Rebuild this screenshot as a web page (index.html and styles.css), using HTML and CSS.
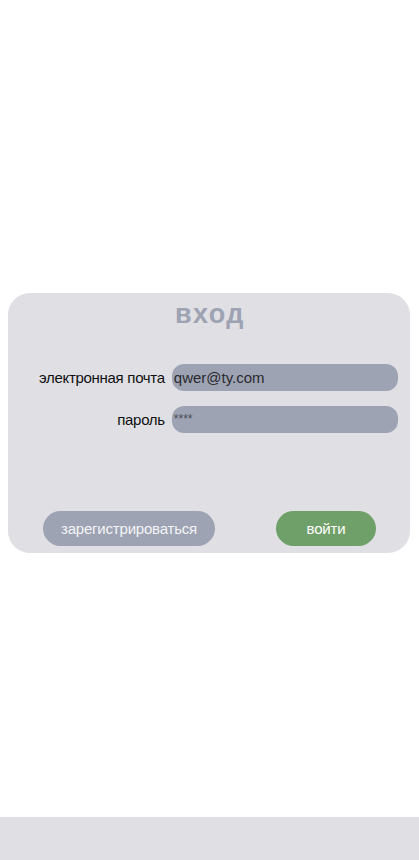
FILE: index.html
```html
<!DOCTYPE html>
<html lang="ru">
<head>
<meta charset="utf-8">
<title>вход</title>
<link rel="stylesheet" href="styles.css">
</head>
<body>
<div class="page">
  <main class="main">
    <form class="card">
      <h1 class="title">вход</h1>
      <div class="fields">
        <label class="label" for="email">электронная почта</label>
        <div class="input email" id="email">qwer@ty.com</div>
        <label class="label" for="pass">пароль</label>
        <div class="input pass" id="pass">****</div>
      </div>
      <div class="actions">
        <button type="button" class="btn btn-reg">зарегистрироваться</button>
        <button type="button" class="btn btn-login">войти</button>
      </div>
    </form>
  </main>
  <footer class="footer"></footer>
</div>
</body>
</html>
```
FILE: styles.css
```css
* { box-sizing: border-box; }
html, body { margin: 0; padding: 0; }
body {
  font-family: "Liberation Sans", Arial, sans-serif;
  background: #ffffff;
  color: #111;
}
.page {
  min-height: 860px;
  display: flex;
  flex-direction: column;
}
.main {
  flex: 1;
  padding: 293px 9px 0 8px;
}
.card {
  background: #dfdfe4;
  border-radius: 22px;
  height: 260px;
  display: flex;
  flex-direction: column;
}
.title {
  margin: 6px 0 0 2px;
  font-size: 27px;
  line-height: 30px;
  font-weight: bold;
  text-align: center;
  color: #9ea3b3;
  letter-spacing: 1.4px;
}
.fields {
  margin-top: 35px;
  display: grid;
  grid-template-columns: auto 1fr;
  column-gap: 7px;
  row-gap: 15px;
  padding: 0 12px 0 31px;
  align-items: center;
}
.label {
  font-size: 15px;
  letter-spacing: -0.3px;
  text-align: right;
  color: #111;
}
.input {
  height: 27px;
  border-radius: 12px;
  background: #9ea3b3;
  padding-left: 2px;
  display: flex;
  align-items: center;
}
.email {
  font-size: 15px;
  color: #2a2a2e;
}
.pass {
  font-size: 12px;
  color: #4a4c55;
  align-items: flex-start;
  padding-top: 6px;
}
.actions {
  margin-top: 78px;
  display: flex;
  justify-content: space-between;
  padding: 0 34px 0 35px;
}
.btn {
  height: 35px;
  border: none;
  border-radius: 18px;
  font-family: "Liberation Sans", Arial, sans-serif;
  font-size: 15px;
  letter-spacing: -0.2px;
  color: #f4f4f6;
  padding: 0;
}
.btn-reg {
  width: 172px;
  background: #9ea3b3;
}
.btn-login {
  width: 100px;
  background: #70a069;
  color: #ffffff;
}
.footer {
  height: 43px;
  background: #dfdfe4;
}
```
